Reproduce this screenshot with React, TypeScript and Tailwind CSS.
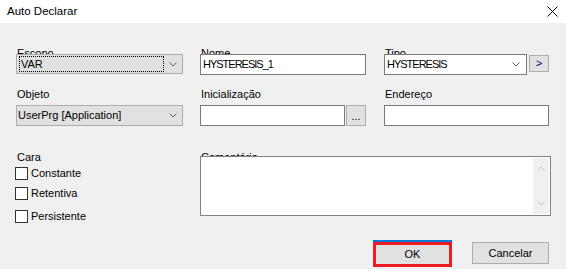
import React from 'react';

const font = { fontFamily: '"Liberation Sans", Arial, sans-serif' };

function Chevron({ className = '' }: { className?: string }) {
  return (
    <svg width="8" height="5" viewBox="0 0 8 5" className={className}>
      <path d="M0.5 0.5 L4 4 L7.5 0.5" fill="none" stroke="currentColor" strokeWidth="1" />
    </svg>
  );
}

// rótulo meio escondido atrás do controle (como no original)
function ClippedLabel({ text }: { text: string }) {
  return <div className="h-[13px] leading-[13px] pl-px text-black">{text}</div>;
}

function Label({ text }: { text: string }) {
  return <div className="h-[13px] leading-[13px] pl-px text-black">{text}</div>;
}

function Checkbox({ label, className = '' }: { label: string; className?: string }) {
  return (
    <div className={`flex items-center -ml-px ${className}`}>
      <div className="w-[13px] h-[13px] bg-white border border-[#333333]" />
      <span className="ml-[3px] leading-[13px] text-black">{label}</span>
    </div>
  );
}

export default function App() {
  return (
    <div className="w-[566px] h-[269px] bg-[#f0f0f0] text-[11px] overflow-hidden" style={font}>
      {/* barra de título */}
      <div className="h-[23px] bg-white flex items-center justify-between pl-[7px] pr-[8px]">
        <span className="text-[11.5px] text-black">Auto Declarar</span>
        <svg width="11" height="11" viewBox="0 0 11 11">
          <path d="M0.5 0.5 L10.5 10.5 M10.5 0.5 L0.5 10.5" stroke="#000" strokeWidth="1" />
        </svg>
      </div>

      <div className="pl-[16px] pt-[24px]">
        {/* linha 1 */}
        <div className="grid grid-cols-[167px_166px_166px] gap-x-[17px]">
          <div>
            <ClippedLabel text="Escopo" />
            <div className="relative -mt-[6px] h-[20px] bg-[#e1e1e1] border border-[#adadad] flex items-center">
              <div className="ml-[2px] w-[145px] h-[16px] border border-dotted border-black flex items-center pl-px leading-none">
                VAR
              </div>
              <Chevron className="ml-auto mr-[5px] text-[#606060]" />
            </div>
          </div>
          <div>
            <ClippedLabel text="Nome" />
            <div className="relative -mt-[6px] h-[21px] bg-white border border-[#7a7a7a] flex items-center pl-[2px] tracking-[-1px]">
              HYSTERESIS_1
            </div>
          </div>
          <div className="ml-px">
            <ClippedLabel text="Tipo" />
            <div className="relative -mt-[6px] flex items-start">
              <div className="w-[144px] h-[21px] bg-white border border-[#7a7a7a] flex items-center pl-[2px]">
                <span className="tracking-[-1px]">HYSTERESIS</span>
                <Chevron className="ml-auto mr-[6px] text-[#606060]" />
              </div>
              <div className="ml-[2px] mt-px w-[20px] h-[17px] bg-[#e1e1e1] border border-[#adadad] flex items-center justify-center text-[#00007a] leading-none">
                &gt;
              </div>
            </div>
          </div>
        </div>

        {/* linha 2 */}
        <div className="grid grid-cols-[167px_166px_166px] gap-x-[17px] mt-[13px]">
          <div>
            <Label text="Objeto" />
            <div className="mt-[4px] h-[21px] bg-[#e1e1e1] border border-[#adadad] flex items-center pl-px">
              UserPrg [Application]
              <Chevron className="ml-auto mr-[5px] text-[#606060]" />
            </div>
          </div>
          <div>
            <Label text="Inicialização" />
            <div className="mt-[4px] flex">
              <div className="w-[145px] h-[21px] bg-white border border-[#7a7a7a]" />
              <div className="ml-px w-[20px] h-[21px] bg-[#e1e1e1] border border-[#adadad] flex items-end justify-center pb-[3px] leading-none text-black">
                ...
              </div>
            </div>
          </div>
          <div className="ml-px">
            <Label text="Endereço" />
            <div className="mt-[4px] h-[21px] bg-white border border-[#7a7a7a]" />
          </div>
        </div>

        {/* linha 3 */}
        <div className="flex mt-[25px]">
          <div className="w-[184px]">
            <Label text="Cara" />
            <Checkbox label="Constante" className="mt-[3px]" />
            <Checkbox label="Retentiva" className="mt-[7px]" />
            <Checkbox label="Persistente" className="mt-[10px]" />
          </div>
          <div className="w-[351px]">
            <ClippedLabel text="Comentário" />
            <div className="relative -mt-[8px] h-[60px] bg-white border border-[#828282] flex justify-end p-px">
              <div className="w-[16px] h-full bg-[#f0f0f0] flex flex-col items-center justify-between py-[8px] text-[#c2c2c2]">
                <Chevron className="rotate-180" />
                <Chevron />
              </div>
            </div>
          </div>
        </div>
      </div>

      {/* botões */}
      <div className="flex justify-end items-start pr-[17px] mt-[17px]">
        <div className="border-t-2 border-[#0078d7]">
          <div className="w-[79px] h-[25px] bg-[#e1e1e1] border-[3px] border-[#ed1c24] flex items-center justify-center text-black">
            OK
          </div>
        </div>
        <div className="ml-[20px] mt-[2px] w-[77px] h-[22px] bg-[#e1e1e1] border border-[#adadad] flex items-center justify-center text-black">
          Cancelar
        </div>
      </div>
    </div>
  );
}
